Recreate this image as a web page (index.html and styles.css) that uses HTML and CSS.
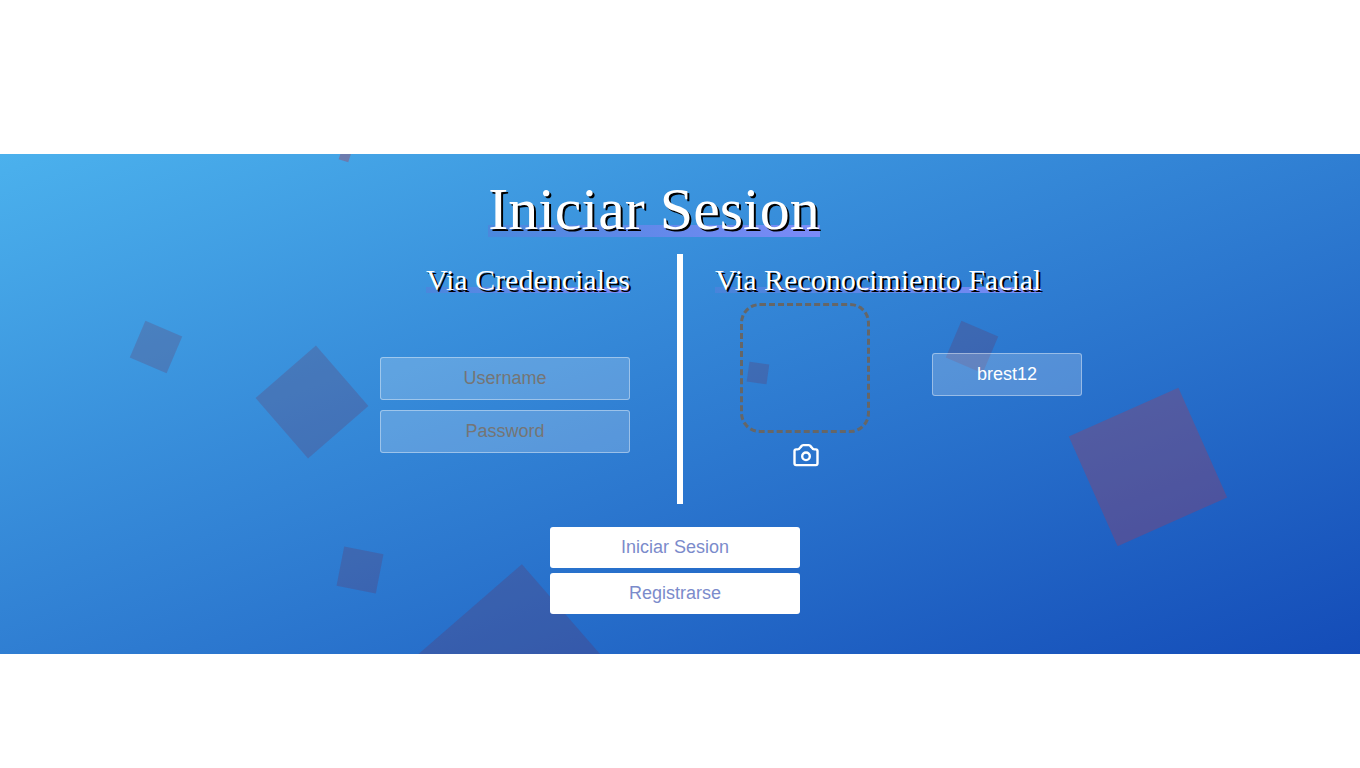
FILE: index.html
```
<!DOCTYPE html>
<html lang="es">
<head>
<meta charset="utf-8">
<title>Iniciar Sesion</title>
<link rel="stylesheet" href="styles.css">
</head>
<body>
<main class="login">
  <div class="squares" aria-hidden="true">
    <span class="square square-a"></span>
    <span class="square square-b"></span>
    <span class="square square-c"></span>
    <span class="square square-d"></span>
    <span class="square square-e"></span>
    <span class="square square-f"></span>
    <span class="square square-g"></span>
    <span class="square square-h"></span>
  </div>
  <form class="form">
    <h1 class="title"><span class="marked">Iniciar Sesion</span></h1>
    <div class="panels">
      <section class="credentials">
        <h2 class="subtitle"><span class="marked">Via Credenciales</span></h2>
        <div class="fields">
          <input class="field" type="text" placeholder="Username" aria-label="Username">
          <input class="field" type="password" placeholder="Password" aria-label="Password">
        </div>
      </section>
      <div class="divider"></div>
      <section class="facial">
        <h2 class="subtitle"><span class="marked">Via Reconocimiento Facial</span></h2>
        <div class="capture">
          <div class="photo">
            <div class="frame"></div>
            <button class="camera" type="button" aria-label="Tomar foto">
              <svg width="28" height="24" viewBox="-2 0 28 24" fill="none" stroke="currentColor" stroke-width="2.4" stroke-linejoin="round">
                <path d="M3.2 6.4H4.6C6.3 6.4 6.9 5.4 7.6 4.2C8.6 3.2 8.5 2.1 10.2 2.1H15.8C17.5 2.1 17.4 3.2 18.4 4.2C19.1 5.4 19.7 6.4 21.4 6.4H22.8Q24.5 6.4 24.5 8.1V20.3Q24.5 22.1 22.8 22.1H3.2Q1.5 22.1 1.5 20.3V8.1Q1.5 6.4 3.2 6.4Z"/>
                <circle cx="13" cy="13.3" r="3.8"/>
              </svg>
            </button>
          </div>
          <input class="field field-small" type="text" value="brest12" aria-label="Usuario">
        </div>
      </section>
    </div>
    <div class="actions">
      <button class="action" type="submit">Iniciar Sesion</button>
      <button class="action" type="button">Registrarse</button>
    </div>
  </form>
</main>
</body>
</html>
```
FILE: styles.css
```
* {
  box-sizing: border-box;
}
body {
  margin: 0;
  padding: 154px 0 114px;
  background: #fff;
  font-family: "Liberation Serif", "Times New Roman", serif;
}
.login {
  position: relative;
  overflow: hidden;
  padding: 21px 0 40px;
  background: linear-gradient(to bottom right, #4bb1ed, #144cb8);
  color: #fff;
}
.form {
  position: relative;
  display: flex;
  flex-direction: column;
}
.title,
.subtitle {
  margin: 0;
  font-weight: 400;
  text-shadow: 2px 2px #000;
}
.title {
  padding-right: 52px;
  font-size: 60px;
  line-height: 68px;
  text-align: center;
}
.subtitle {
  font-size: 30px;
  line-height: 34px;
}
.marked {
  background: linear-gradient(90deg, rgba(80, 130, 220, 0.7), #7b8bf8) no-repeat 0 90% / 100% 0.2em;
}
.panels {
  display: grid;
  grid-template-columns: 1fr 6px 1fr;
  min-height: 250px;
  margin-top: 11px;
}
.credentials {
  display: flex;
  flex-direction: column;
  align-items: flex-end;
  gap: 60px;
  padding: 9px 47px 0 0;
}
.fields {
  display: flex;
  flex-direction: column;
  gap: 10px;
}
.divider {
  background: #fff;
}
.facial {
  display: flex;
  flex-direction: column;
  gap: 6px;
  padding: 9px 0 0 32px;
}
.capture {
  display: flex;
  gap: 62px;
  padding-left: 25px;
}
.photo {
  display: flex;
  flex-direction: column;
  align-items: center;
  gap: 10px;
}
.frame {
  width: 130px;
  height: 130px;
  border: 3px dashed #666;
  border-radius: 20px;
}
.camera {
  padding: 0;
  border: 0;
  background: none;
  color: #fff;
}
.camera svg {
  display: block;
}
.field,
.action {
  width: 250px;
  border-radius: 3px;
  font-family: "Liberation Sans", Arial, sans-serif;
  font-size: 18px;
  line-height: 21px;
  text-align: center;
}
.field {
  padding: 10px 15px;
  border: 1px solid rgba(255, 255, 255, 0.4);
  background: rgba(255, 255, 255, 0.2);
  color: #fff;
}
.field::placeholder {
  color: #757575;
}
.field-small {
  align-self: flex-start;
  width: 150px;
  margin-top: 50px;
}
.actions {
  display: flex;
  flex-direction: column;
  align-items: center;
  gap: 5px;
  margin-top: 23px;
  padding-right: 10px;
}
.action {
  padding: 10px 15px;
  border: 0;
  background: #fff;
  color: #7b8bcb;
}
.squares {
  position: absolute;
  inset: 0;
}
.square {
  position: absolute;
  width: 40px;
  height: 40px;
  background: rgba(118, 32, 65, 0.21);
}
.square-a {
  left: 136px;
  top: 173px;
  transform: rotate(23deg);
}
.square-b {
  left: 272px;
  top: 208px;
  width: 80px;
  height: 80px;
  transform: rotate(49deg);
}
.square-c {
  left: 340px;
  top: 396px;
  transform: rotate(11deg);
}
.square-d {
  left: 434px;
  top: 443px;
  width: 160px;
  height: 160px;
  transform: rotate(49deg);
}
.square-e {
  left: 748px;
  top: 209px;
  width: 20px;
  height: 20px;
  transform: rotate(8deg);
}
.square-f {
  left: 952px;
  top: 173px;
  transform: rotate(23deg);
}
.square-g {
  left: 1088px;
  top: 253px;
  width: 120px;
  height: 120px;
  background: rgba(175, 55, 80, 0.32);
  transform: rotate(-24deg);
}
.square-h {
  left: 340px;
  top: -3px;
  width: 10px;
  height: 10px;
  background: rgba(175, 55, 80, 0.37);
  transform: rotate(18deg);
}
```
